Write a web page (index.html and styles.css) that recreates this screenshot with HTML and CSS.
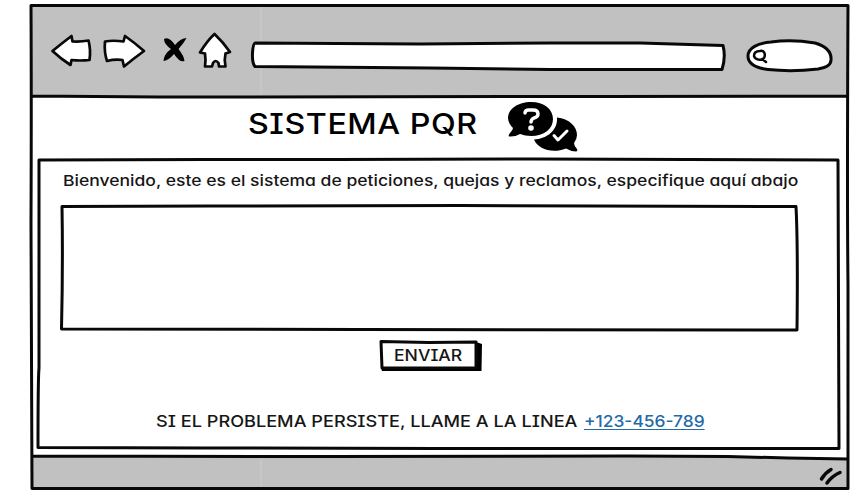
FILE: index.html
```
<!DOCTYPE html>
<html lang="es">
<head>
<meta charset="utf-8">
<title>Sistema PQR</title>
<link rel="stylesheet" href="styles.css">
</head>
<body>
<div class="window">
  <svg class="sketch window-sketch" viewBox="0 0 821 487">
    <path class="bar-fill" d="M2 2H820L820 92H3ZM4 451L300 451L819 454L820 484H4Z"/>
    <path class="seam" d="M233 3V90M233 453V483"/>
    <path d="M3 1.500L820 1.500Q819 200 820 280Q820 380 820 484.500L4 484.500Q3.500 300 3 220Q3.500 100 3 1.500M4 92L130 93L580 92.500L819 92M4 452L300 452.500L600 452L700 452.500L760 454L820 455"/>
    <path class="grip" d="M793.500 475Q797 469 803 465.500M799 479Q804 472 812 468.500"/>
  </svg>
  <header class="toolbar">
    <svg class="icon back" viewBox="0 0 42 34"><path d="M2.500 17Q11 10 21.500 2L22.500 7.500Q31 8 38.500 6.500Q41 16 39.500 26Q30 27 21.500 26L20.500 31Q11 25 2.500 17Z"/></svg>
    <svg class="icon forward" viewBox="0 0 42 34"><path d="M2 7.500Q10 6 20.500 7.500L22 2Q32 9 41 17Q30 25 21 32.500L19.500 26Q12 25 4 27Q1 18 2 7.500Z"/></svg>
    <svg class="icon stop" viewBox="0 0 24 26"><path class="solid" d="M2 3Q7 0 13 9Q19 2 24.500 2Q22 7 16.500 13Q22 20 22.500 25Q18 27 12 18Q6 25 1.500 25Q2 18 9 13Q2 8 2 3Z"/></svg>
    <svg class="icon home" viewBox="0 0 32 36"><path d="M15.500 2Q24 10 31 20L26.500 21.500Q25 28 26.500 34.500L20 34.500L19.500 31Q16.500 27 14 31L13 34.500L6 34.500Q7 28 6 21.500L1 20.500Q8 9 15.500 2Z"/></svg>
    <div class="address"><svg class="sketch" viewBox="0 0 475 30"><path class="paper" d="M5 2L170 3L300 2L390 2L473 4.500Q476 16 472 28.500L300 28.500L180 27L5 25.500Q2 22 2.500 12Q3 3 5 2Z"/></svg></div>
    <div class="search"><svg class="sketch" viewBox="0 0 88 34"><path class="paper" d="M2 17C2 9 12 4 25 3Q46 0 69 4Q86 9 85 21Q85 28 72 30Q46 33 22 30.500Q2 28 2 17Z"/><path class="lens" d="M14 12C18 11 20 15 18 19C16 22 9 21 8 17C8 13 11 12 14 12ZM16 20L20 23"/></svg></div>
  </header>
  <div class="heading">
    <h1>SISTEMA PQR</h1>
    <svg class="chat" viewBox="0 0 72 52">
      <path class="solid" d="M24 1C37 1 46 8 46 18C46 28 37 35 24 35Q18 35 13 33Q8 36 2 35.500Q1 34 3 32Q6 29 6 27Q1 22 1 17C1 8 11 1 24 1Z"/>
      <path class="solid" d="M50 16.500C62 18 70 25 70 34Q70 38 67 42Q67 45 70 48Q71 50 69 50.500Q63 50 59 47.500C45 53 31 48 27 38.500C40 38 51 29 50 16.500Z"/>
      <path class="mark" d="M18 12Q18 9 22 9H26Q31 9 31 13Q31 16 27 17Q24 18.500 24 21"/><circle class="dot" cx="24" cy="27" r="2.800"/>
      <path class="check" d="M47 34.500L51 39L60 30"/>
    </svg>
  </div>
  <main class="panel">
    <svg class="sketch" viewBox="0 0 804 293"><path d="M3 2L170 1.500L300 1.500L500 1L802 2Q803 120 803 290.500L400 290.500L170 290L2 289.500Q2 220 3 210Z"/></svg>
    <p class="welcome">Bienvenido, este es el sistema de peticiones, quejas y reclamos, especifique aquí abajo</p>
    <div class="message" role="textbox">
      <svg class="sketch" viewBox="0 0 740 128"><path d="M2 2.500L150 2L400 1.500L736 2.500Q738 40 737 126L300 125.500L1.500 125Q3 60 2 2.500Z"/></svg>
    </div>
    <div class="send">
      <svg class="sketch" viewBox="0 0 104 32"><path class="solid" d="M97 2L103 4L102.500 31H3L2 28H97Z"/><path d="M2 1.500L50 2.500L97 2V28L3 28Z"/></svg>
      <span>ENVIAR</span>
    </div>
    <p class="contact"><span>SI EL PROBLEMA PERSISTE, LLAME A LA LINEA</span> <a href="#">+123-456-789</a></p>
  </main>
</div>
</body>
</html>
```
FILE: styles.css
```
* { box-sizing: border-box; }
body { margin: 0; background: #fff; color: #161616; font-family: Inter, "Open Sans", sans-serif; font-weight: 500; font-feature-settings: "cv11", "cv08"; overflow: hidden; }
.window { position: relative; width: 821px; height: 487px; margin: 4px 0 0 28px; }
svg { display: block; fill: none; stroke: #080808; stroke-width: 3; stroke-linejoin: round; stroke-linecap: round; overflow: visible; }
.sketch { position: absolute; inset: 0; width: 100%; height: 100%; }
.window-sketch { z-index: -1; }
.bar-fill { fill: #c1c1c1; stroke: none; }
.seam { stroke: #cdcdcd; stroke-width: 1; }
.grip { stroke-width: 3.5; }
.icon { flex: none; fill: #fff; stroke-width: 2.7; }
.solid { fill: #000; stroke: none; }
.paper { fill: #fff; }
.lens { stroke-width: 2.5; }
.toolbar { height: 93px; display: flex; align-items: flex-start; padding-left: 22px; }
.back { width: 42px; height: 34px; margin-top: 30px; }
.forward { width: 42px; height: 34px; margin: 30px 0 0 11px; }
.stop { width: 24px; height: 26px; margin: 32px 0 0 17px; }
.home { width: 32px; height: 36px; margin: 28px 0 0 13px; }
.address { position: relative; width: 475px; height: 30px; margin: 37px 0 0 19px; }
.search { position: relative; width: 88px; height: 34px; margin: 35px 0 0 21px; }
.heading { height: 61px; display: flex; align-items: flex-start; padding-left: 220px; }
h1 { width: 231px; margin: 7px 0 0; font-size: 29px; line-height: 40px; font-weight: 500; letter-spacing: .5px; white-space: nowrap; color: #000; transform: scaleX(1.11); transform-origin: left; }
.chat { width: 72px; height: 52px; margin: 4px 0 0 28px; }
.mark { stroke: #fff; stroke-width: 3.5; }
.dot { fill: #fff; stroke: none; }
.check { stroke: #fff; stroke-width: 3; }
.panel { position: relative; width: 804px; height: 293px; margin-left: 8px; padding: 11px 0 0 24px; }
p { margin: 0; white-space: nowrap; }
.welcome { width: fit-content; margin-left: 3px; height: 35px; font-size: 15px; line-height: 24px; transform: scaleX(1.169); transform-origin: left; }
.message { position: relative; width: 740px; height: 128px; }
.send { position: relative; width: 104px; height: 32px; margin: 8px 0 0 319px; padding-left: 15px; font-size: 16px; line-height: 31px; }
.send span, .contact span, .contact a { display: inline-block; position: relative; transform: scaleX(1.1); transform-origin: left; }
.contact { display: flex; margin: 37px 0 0 96px; font-size: 16px; line-height: 24px; }
.contact span { width: 428px; margin-right: 0; }
.contact span { width: max-content; margin-right: 56px; transform: scaleX(1.133); }
.contact a { transform: scaleX(1.085); color: #2469a8; text-underline-offset: 2px; text-decoration-thickness: 1px; }
```
